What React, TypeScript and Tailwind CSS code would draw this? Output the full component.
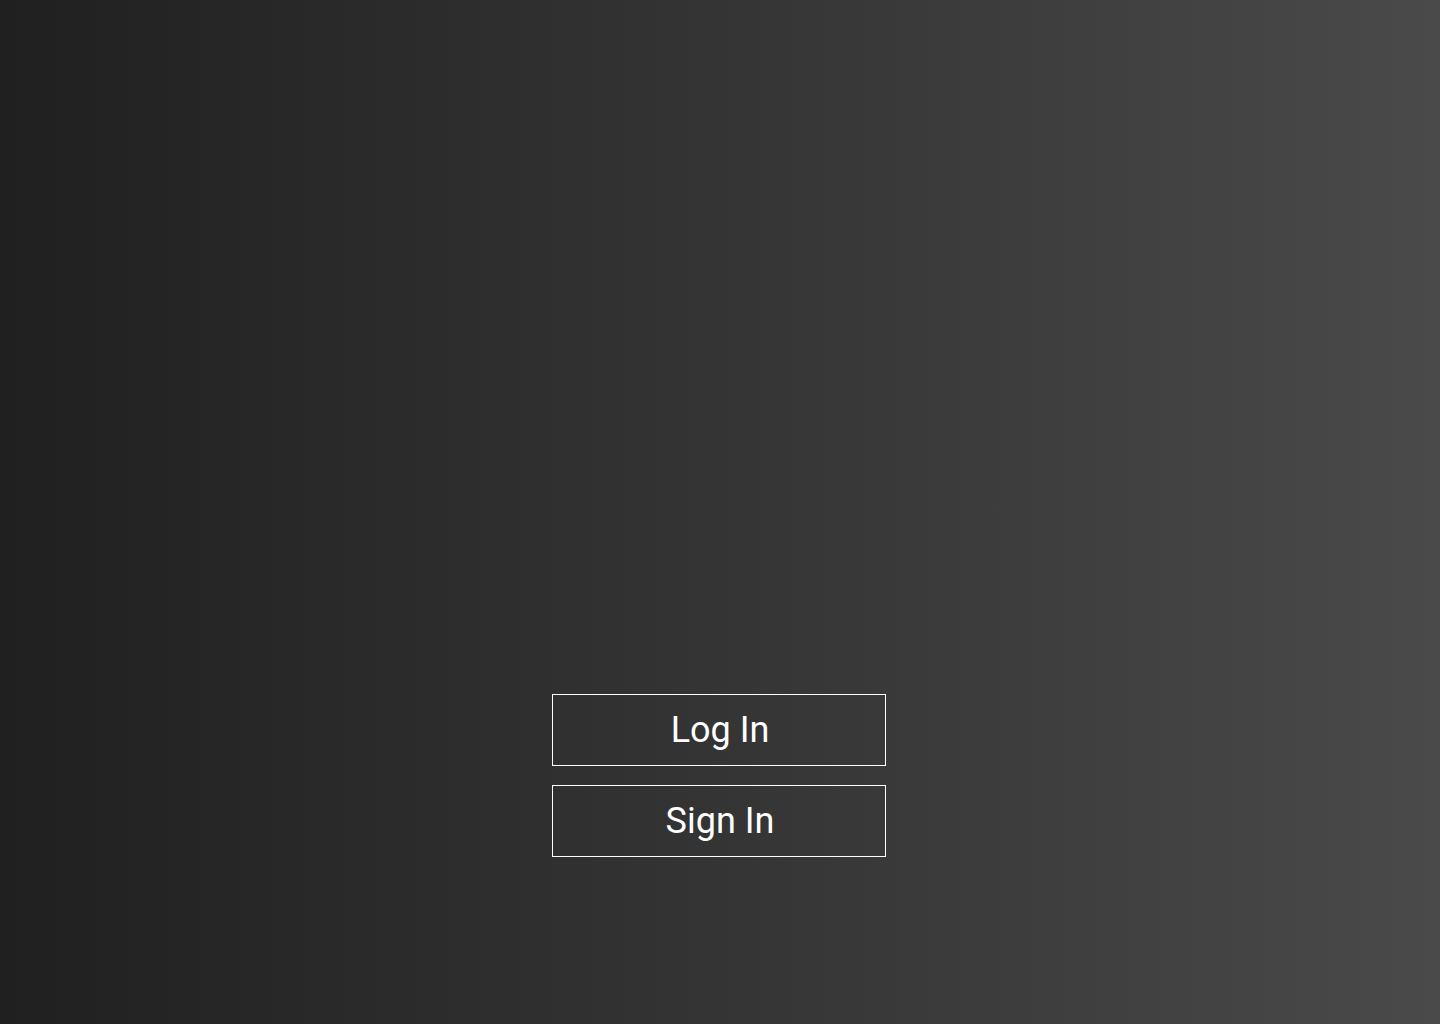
export default function App() {
  return (
    <div className="w-full h-[1024px] bg-linear-to-r from-[#202020] to-[#4a4a4a] flex flex-col items-center justify-end pb-[167px] gap-[19px] font-['Roboto',sans-serif]">
      <button className="w-[334px] h-[72px] mr-[2px] border border-white text-white text-[36px] leading-none flex items-center justify-center">
        <span className="ml-[2px]">Log In</span>
      </button>
      <button className="w-[334px] h-[72px] mr-[2px] border border-white text-white text-[36px] leading-none flex items-center justify-center">
        <span className="ml-[2px]">Sign In</span>
      </button>
    </div>
  );
}
